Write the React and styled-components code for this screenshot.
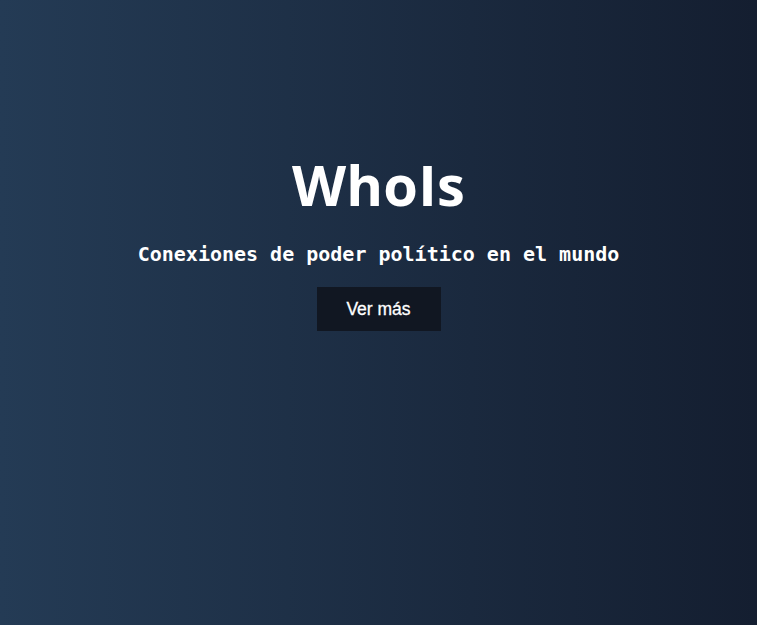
import React from 'react';
import styled, { createGlobalStyle } from 'styled-components';

const GlobalStyle = createGlobalStyle`
  html, body {
    margin: 0;
    padding: 0;
    height: 100%;
  }
  #root {
    height: 100%;
  }
`;

const Hero = styled.section`
  box-sizing: border-box;
  min-height: 625px;
  height: 100%;
  background: linear-gradient(to right, #243b55, #141e30);
  display: flex;
  flex-direction: column;
  align-items: center;
  padding-top: 146px;
  color: #ffffff;
`;

const Title = styled.h1`
  margin: 0;
  font-family: 'Open Sans', 'DejaVu Sans', sans-serif;
  font-weight: 700;
  font-size: 56px;
  line-height: 76px;
  letter-spacing: 0.2px;
`;

const Subtitle = styled.p`
  margin: 19px 0 0;
  font-family: 'DejaVu Sans Mono', 'Liberation Mono', monospace;
  font-weight: 700;
  font-size: 20px;
  line-height: 26px;
`;

const Button = styled.button`
  margin-top: 20px;
  width: 124px;
  height: 44px;
  border: none;
  border-radius: 0;
  background: #111722;
  color: #ffffff;
  font-family: 'Liberation Sans', Arial, sans-serif;
  font-size: 17.5px;
  -webkit-text-stroke: 0.3px #ffffff;
  cursor: pointer;
`;

export default function App() {
  return (
    <>
      <GlobalStyle />
      <Hero>
        <Title>WhoIs</Title>
        <Subtitle>Conexiones de poder político en el mundo</Subtitle>
        <Button>Ver más</Button>
      </Hero>
    </>
  );
}
